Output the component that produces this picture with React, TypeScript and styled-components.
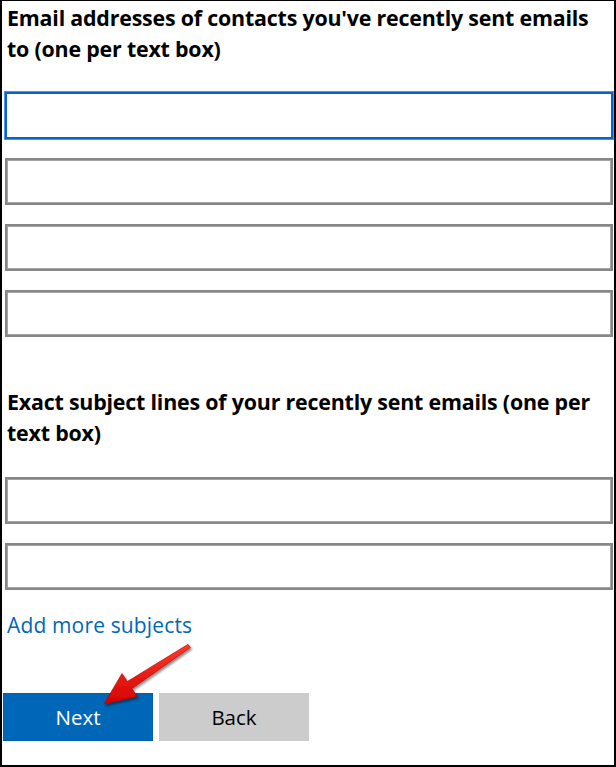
import React from "react";
import styled, { createGlobalStyle } from "styled-components";

const GlobalStyle = createGlobalStyle`
  html, body {
    margin: 0;
    padding: 0;
    background: #ffffff;
  }
  body {
    font-family: "Open Sans", "Noto Sans", "Liberation Sans", sans-serif;
    color: #000000;
  }
`;

const Frame = styled.div`
  position: relative;
  box-sizing: border-box;
  width: 616px;
  height: 767px;
  border-style: solid;
  border-color: #000000;
  border-width: 1px 2px 2px 2px;
  padding: 1px 1px 0 3px;
  display: flex;
  flex-direction: column;
  background: #ffffff;
  overflow: hidden;
`;

const Heading = styled.h2<{ $top: number }>`
  margin: ${(p) => p.$top}px 0 0 0;
  padding-left: 2px;
  font-size: 21.4px;
  line-height: 31px;
  font-weight: 700;
  letter-spacing: -0.2px;
  max-width: 596px;
`;

const FieldList = styled.div<{ $top: number }>`
  display: flex;
  flex-direction: column;
  gap: 19px;
  margin-top: ${(p) => p.$top}px;
`;

const TextBox = styled.input<{ $focused?: boolean }>`
  box-sizing: border-box;
  display: block;
  width: 100%;
  height: 47px;
  margin: 0;
  padding: 0 10px;
  background: #ffffff;
  font-family: inherit;
  font-size: 18px;
  outline: none;
  border: 2px solid ${(p) => (p.$focused ? "#0a63c9" : "#878787")};
  box-shadow: ${(p) =>
    p.$focused ? "0 0 0 1px #4d94e6" : "inset 0 0 0 1px #a3a3a3"};
`;

const MoreLink = styled.a`
  display: block;
  margin-top: 21px;
  padding-left: 2px;
  font-size: 21px;
  line-height: 28px;
  letter-spacing: 0.15px;
  color: #0067b8;
  text-decoration: none;
  cursor: pointer;
`;

const ButtonRow = styled.div`
  display: flex;
  gap: 6px;
  margin-top: 54px;
  margin-left: -2px;
`;

const ActionButton = styled.button<{ $primary?: boolean }>`
  box-sizing: border-box;
  width: 150px;
  height: 48px;
  margin: 0;
  padding: 0 0 1px 0;
  border: 1px solid ${(p) => (p.$primary ? "#0060ad" : "#cccccc")};
  background: ${(p) => (p.$primary ? "#0067b8" : "#cccccc")};
  color: ${(p) => (p.$primary ? "#ffffff" : "#000000")};
  font-family: inherit;
  font-size: 20.5px;
  line-height: 28px;
  cursor: pointer;
`;

const ArrowLayer = styled.svg`
  position: absolute;
  left: -2px;
  top: -1px;
  width: 616px;
  height: 767px;
  pointer-events: none;
  overflow: visible;
`;

const RedArrow = () => (
  <ArrowLayer viewBox="0 0 616 767">
    <defs>
      <linearGradient id="arrowRed" x1="0" y1="0" x2="0" y2="1">
        <stop offset="0" stopColor="#ff3b2b" />
        <stop offset="1" stopColor="#d40000" />
      </linearGradient>
      <filter id="arrowShadow" x="-20%" y="-20%" width="140%" height="140%">
        <feDropShadow dx="1.5" dy="2" stdDeviation="1.2" floodColor="#000000" floodOpacity="0.45" />
      </filter>
    </defs>
    <polygon
      points="104,704 122,673.5 127.3,681.5 188,644.3 190.4,647.4 132,688.6 137.2,696.5"
      fill="url(#arrowRed)"
      stroke="#b00000"
      strokeWidth="0.6"
      strokeLinejoin="round"
      filter="url(#arrowShadow)"
    />
  </ArrowLayer>
);

export default function App() {
  return (
    <>
      <GlobalStyle />
      <Frame>
        <Heading $top={0}>
          Email addresses of contacts you've recently sent emails to (one per text box)
        </Heading>
        <FieldList $top={28}>
          <TextBox $focused aria-label="Email address 1" />
          <TextBox aria-label="Email address 2" />
          <TextBox aria-label="Email address 3" />
          <TextBox aria-label="Email address 4" />
        </FieldList>
        <Heading $top={49}>
          Exact subject lines of your recently sent emails (one per text box)
        </Heading>
        <FieldList $top={29}>
          <TextBox aria-label="Subject 1" />
          <TextBox aria-label="Subject 2" />
        </FieldList>
        <MoreLink>Add more subjects</MoreLink>
        <ButtonRow>
          <ActionButton $primary>Next</ActionButton>
          <ActionButton>Back</ActionButton>
        </ButtonRow>
        <RedArrow />
      </Frame>
    </>
  );
}
